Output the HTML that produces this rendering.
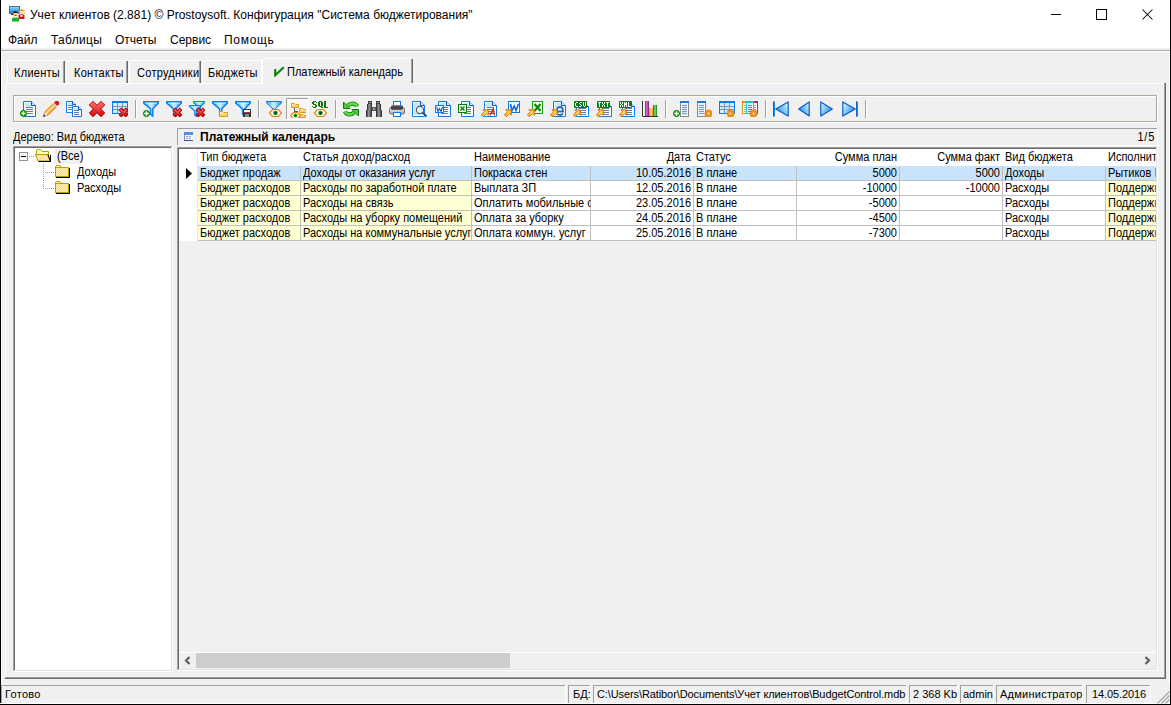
<!DOCTYPE html>
<html><head><meta charset="utf-8"><style>
html,body{margin:0;padding:0;}
body{width:1171px;height:705px;overflow:hidden;background:#f0f0f0;position:relative;font-family:"Liberation Sans",sans-serif;}
body>div,body>svg{position:absolute;}
.t{white-space:pre;}
</style></head><body>
<div style="left:0px;top:0px;width:1171px;height:48px;background:#fff"></div>
<div style="left:0px;top:50px;width:1171px;height:1px;background:#aca899"></div>
<div style="left:0px;top:51px;width:1171px;height:1px;background:#ffffff"></div>
<div class="t" style="top:8px;font-size:12px;line-height:14px;color:#000;left:30px;">Учет клиентов (2.881) © Prostoysoft. Конфигурация &quot;Система бюджетирования&quot;</div>
<div class="t" style="top:33px;font-size:12px;line-height:14px;color:#000;left:8px;letter-spacing:0px;">Файл</div>
<div class="t" style="top:33px;font-size:12px;line-height:14px;color:#000;left:51px;letter-spacing:0.3px;">Таблицы</div>
<div class="t" style="top:33px;font-size:12px;line-height:14px;color:#000;left:115px;letter-spacing:0px;">Отчеты</div>
<div class="t" style="top:33px;font-size:12px;line-height:14px;color:#000;left:170px;letter-spacing:0px;">Сервис</div>
<div class="t" style="top:33px;font-size:12px;line-height:14px;color:#000;left:224px;letter-spacing:0.7px;">Помощь</div>
<div style="left:1051px;top:14px;width:10px;height:1px;background:#000"></div>
<div style="left:1096px;top:9px;width:9px;height:9px;border:1px solid #000;box-sizing:content-box"></div>
<svg style="position:absolute;left:1142px;top:9px" width="11" height="11"><path d="M0.5 0.5L10.5 10.5M10.5 0.5L0.5 10.5" stroke="#000" stroke-width="1.05"/></svg>
<div style="left:0px;top:0px;width:1px;height:705px;background:#000"></div>
<div style="left:1170px;top:0px;width:1px;height:705px;background:#000"></div>
<div style="left:1px;top:52px;width:1px;height:633px;background:#ffffff"></div>
<div style="left:1169px;top:52px;width:1px;height:633px;background:#ffffff"></div>
<div style="left:0px;top:704px;width:1171px;height:1px;background:#000"></div>
<div style="left:8px;top:60px;width:56px;height:1px;background:#ffffff"></div>
<div style="left:7px;top:61px;width:1px;height:22px;background:#ffffff"></div>
<div style="left:63px;top:61px;width:1px;height:22px;background:#a0a0a0"></div>
<div style="left:64px;top:61px;width:1px;height:22px;background:#696969"></div>
<div class="t" style="top:66px;font-size:12px;line-height:14px;color:#000;transform:scaleX(0.917);transform-origin:0 0;left:14px;letter-spacing:0.3px;">Клиенты</div>
<div style="left:67px;top:60px;width:60px;height:1px;background:#ffffff"></div>
<div style="left:66px;top:61px;width:1px;height:22px;background:#ffffff"></div>
<div style="left:126px;top:61px;width:1px;height:22px;background:#a0a0a0"></div>
<div style="left:127px;top:61px;width:1px;height:22px;background:#696969"></div>
<div class="t" style="top:66px;font-size:12px;line-height:14px;color:#000;transform:scaleX(0.917);transform-origin:0 0;left:74px;letter-spacing:0.3px;">Контакты</div>
<div style="left:130px;top:60px;width:70px;height:1px;background:#ffffff"></div>
<div style="left:129px;top:61px;width:1px;height:22px;background:#ffffff"></div>
<div style="left:199px;top:61px;width:1px;height:22px;background:#a0a0a0"></div>
<div style="left:200px;top:61px;width:1px;height:22px;background:#696969"></div>
<div class="t" style="top:66px;font-size:12px;line-height:14px;color:#000;transform:scaleX(0.917);transform-origin:0 0;left:137px;letter-spacing:0.3px;">Сотрудники</div>
<div style="left:203px;top:60px;width:59px;height:1px;background:#ffffff"></div>
<div style="left:202px;top:61px;width:1px;height:22px;background:#ffffff"></div>
<div class="t" style="top:66px;font-size:12px;line-height:14px;color:#000;transform:scaleX(0.917);transform-origin:0 0;left:208px;letter-spacing:0.3px;">Бюджеты</div>
<div style="left:261px;top:60px;width:1px;height:24px;background:#ffffff"></div>
<div style="left:263px;top:58px;width:148px;height:1px;background:#ffffff"></div>
<div style="left:262px;top:59px;width:1px;height:25px;background:#ffffff"></div>
<div style="left:411px;top:59px;width:1px;height:24px;background:#a0a0a0"></div>
<div style="left:412px;top:59px;width:1px;height:24px;background:#696969"></div>
<svg style="position:absolute;left:273px;top:66px" width="12" height="11"><path d="M2.2 3 L2.2 9.3 L10.8 1.2" stroke="#008000" stroke-width="2" fill="none" stroke-linejoin="miter"/></svg>
<div class="t" style="top:65px;font-size:12px;line-height:14px;color:#000;transform:scaleX(0.917);transform-origin:0 0;left:287px;">Платежный календарь</div>
<div style="left:5px;top:83px;width:257px;height:1px;background:#ffffff"></div>
<div style="left:413px;top:83px;width:752px;height:1px;background:#ffffff"></div>
<div style="left:5px;top:83px;width:1px;height:595px;background:#ffffff"></div>
<div style="left:1164px;top:83px;width:1px;height:595px;background:#a0a0a0"></div>
<div style="left:1165px;top:83px;width:1px;height:596px;background:#696969"></div>
<div style="left:5px;top:677px;width:1160px;height:1px;background:#a0a0a0"></div>
<div style="left:5px;top:678px;width:1161px;height:1px;background:#696969"></div>
<div style="left:13px;top:95px;width:1144px;height:1px;background:#aca899"></div>
<div style="left:13px;top:95px;width:1px;height:27px;background:#aca899"></div>
<div style="left:14px;top:96px;width:1142px;height:1px;background:#ffffff"></div>
<div style="left:14px;top:96px;width:1px;height:25px;background:#ffffff"></div>
<div style="left:13px;top:121px;width:1144px;height:1px;background:#aca899"></div>
<div style="left:1156px;top:95px;width:1px;height:27px;background:#aca899"></div>
<div style="left:13px;top:122px;width:1145px;height:1px;background:#ffffff"></div>
<div style="left:1157px;top:95px;width:1px;height:28px;background:#ffffff"></div>
<div style="left:135px;top:100px;width:1px;height:18px;background:#a0a0a0"></div>
<div style="left:136px;top:100px;width:1px;height:18px;background:#ffffff"></div>
<div style="left:258px;top:100px;width:1px;height:18px;background:#a0a0a0"></div>
<div style="left:259px;top:100px;width:1px;height:18px;background:#ffffff"></div>
<div style="left:335px;top:100px;width:1px;height:18px;background:#a0a0a0"></div>
<div style="left:336px;top:100px;width:1px;height:18px;background:#ffffff"></div>
<div style="left:665px;top:100px;width:1px;height:18px;background:#a0a0a0"></div>
<div style="left:666px;top:100px;width:1px;height:18px;background:#ffffff"></div>
<div style="left:765px;top:100px;width:1px;height:18px;background:#a0a0a0"></div>
<div style="left:766px;top:100px;width:1px;height:18px;background:#ffffff"></div>
<div style="left:865px;top:100px;width:1px;height:18px;background:#a0a0a0"></div>
<div style="left:866px;top:100px;width:1px;height:18px;background:#ffffff"></div>
<div class="t" style="top:130px;font-size:12px;line-height:14px;color:#000;transform:scaleX(0.917);transform-origin:0 0;left:13px;">Дерево: Вид бюджета</div>
<div style="left:15px;top:148px;width:156px;height:522px;background:#fff"></div>
<div style="left:13px;top:146px;width:159px;height:1px;background:#a0a0a0"></div>
<div style="left:13px;top:146px;width:1px;height:525px;background:#a0a0a0"></div>
<div style="left:14px;top:147px;width:157px;height:1px;background:#696969"></div>
<div style="left:14px;top:147px;width:1px;height:523px;background:#696969"></div>
<div style="left:13px;top:671px;width:160px;height:1px;background:#ffffff"></div>
<div style="left:172px;top:146px;width:1px;height:526px;background:#ffffff"></div>
<div style="left:14px;top:670px;width:158px;height:1px;background:#e3e3e3"></div>
<div style="left:171px;top:147px;width:1px;height:524px;background:#e3e3e3"></div>
<div style="left:177px;top:128px;width:981px;height:1px;background:#a0a0a0"></div>
<div style="left:177px;top:128px;width:1px;height:18px;background:#a0a0a0"></div>
<div style="left:177px;top:145px;width:981px;height:1px;background:#ffffff"></div>
<div style="left:1157px;top:128px;width:1px;height:18px;background:#ffffff"></div>
<div class="t" style="top:130px;font-size:12px;line-height:14px;color:#000;font-weight:bold;left:200px;">Платежный календарь</div>
<div class="t" style="top:130px;font-size:12px;line-height:14px;color:#000;transform:scaleX(0.917);transform-origin:100% 0;left:855px;width:300px;text-align:right;letter-spacing:0.8px;">1/5</div>
<div style="left:177px;top:147px;width:980px;height:1px;background:#a0a0a0"></div>
<div style="left:177px;top:147px;width:1px;height:523px;background:#a0a0a0"></div>
<div style="left:178px;top:148px;width:978px;height:1px;background:#696969"></div>
<div style="left:178px;top:148px;width:1px;height:521px;background:#696969"></div>
<div style="left:177px;top:670px;width:981px;height:1px;background:#ffffff"></div>
<div style="left:1157px;top:147px;width:1px;height:524px;background:#ffffff"></div>
<div style="left:178px;top:669px;width:979px;height:1px;background:#e3e3e3"></div>
<div style="left:1156px;top:148px;width:1px;height:522px;background:#e3e3e3"></div>
<div style="left:179px;top:149px;width:977px;height:17px;background:#fff"></div>
<div style="left:179px;top:166px;width:18px;height:75px;background:#fff"></div>
<div style="left:197px;top:149px;width:1px;height:91px;background:#e8e6ec"></div>
<div style="left:198px;top:166px;width:102px;height:14px;background:#c9e3fb"></div>
<div style="left:300px;top:166px;width:1px;height:15px;background:#c0c0c0"></div>
<div style="left:301px;top:166px;width:170px;height:14px;background:#c9e3fb"></div>
<div style="left:471px;top:166px;width:1px;height:15px;background:#c0c0c0"></div>
<div style="left:472px;top:166px;width:118px;height:14px;background:#c9e3fb"></div>
<div style="left:590px;top:166px;width:1px;height:15px;background:#c0c0c0"></div>
<div style="left:591px;top:166px;width:102px;height:14px;background:#c9e3fb"></div>
<div style="left:693px;top:166px;width:1px;height:15px;background:#c0c0c0"></div>
<div style="left:694px;top:166px;width:102px;height:14px;background:#c9e3fb"></div>
<div style="left:796px;top:166px;width:1px;height:15px;background:#c0c0c0"></div>
<div style="left:797px;top:166px;width:102px;height:14px;background:#c9e3fb"></div>
<div style="left:899px;top:166px;width:1px;height:15px;background:#c0c0c0"></div>
<div style="left:900px;top:166px;width:102px;height:14px;background:#c9e3fb"></div>
<div style="left:1002px;top:166px;width:1px;height:15px;background:#c0c0c0"></div>
<div style="left:1003px;top:166px;width:102px;height:14px;background:#c9e3fb"></div>
<div style="left:1105px;top:166px;width:1px;height:15px;background:#c0c0c0"></div>
<div style="left:1106px;top:166px;width:50px;height:14px;background:#c9e3fb"></div>
<div style="left:198px;top:180px;width:958px;height:1px;background:#c0c0c0"></div>
<div class="t" style="top:166px;font-size:12px;line-height:14px;color:#000;transform:scaleX(0.917);transform-origin:0 0;left:200px;width:109.1px;overflow:hidden;">Бюджет продаж</div>
<div class="t" style="top:166px;font-size:12px;line-height:14px;color:#000;transform:scaleX(0.917);transform-origin:0 0;left:303px;width:183.2px;overflow:hidden;">Доходы от оказания услуг</div>
<div class="t" style="top:166px;font-size:12px;line-height:14px;color:#000;transform:scaleX(0.917);transform-origin:0 0;left:474px;width:126.5px;overflow:hidden;">Покраска стен</div>
<div class="t" style="top:166px;font-size:12px;line-height:14px;color:#000;transform:scaleX(0.917);transform-origin:100% 0;left:391px;width:300px;text-align:right;">10.05.2016</div>
<div class="t" style="top:166px;font-size:12px;line-height:14px;color:#000;transform:scaleX(0.917);transform-origin:0 0;left:696px;width:109.1px;overflow:hidden;">В плане</div>
<div class="t" style="top:166px;font-size:12px;line-height:14px;color:#000;transform:scaleX(0.917);transform-origin:100% 0;left:597px;width:300px;text-align:right;">5000</div>
<div class="t" style="top:166px;font-size:12px;line-height:14px;color:#000;transform:scaleX(0.917);transform-origin:100% 0;left:700px;width:300px;text-align:right;">5000</div>
<div class="t" style="top:166px;font-size:12px;line-height:14px;color:#000;transform:scaleX(0.917);transform-origin:0 0;left:1005px;width:109.1px;overflow:hidden;">Доходы</div>
<div class="t" style="top:166px;font-size:12px;line-height:14px;color:#000;transform:scaleX(0.917);transform-origin:0 0;left:1108px;width:52.3px;overflow:hidden;">Рытиков Е</div>
<div style="left:198px;top:181px;width:102px;height:14px;background:#ffffd4"></div>
<div style="left:300px;top:181px;width:1px;height:15px;background:#c0c0c0"></div>
<div style="left:301px;top:181px;width:170px;height:14px;background:#ffffd4"></div>
<div style="left:471px;top:181px;width:1px;height:15px;background:#c0c0c0"></div>
<div style="left:472px;top:181px;width:118px;height:14px;background:#fff"></div>
<div style="left:590px;top:181px;width:1px;height:15px;background:#c0c0c0"></div>
<div style="left:591px;top:181px;width:102px;height:14px;background:#fff"></div>
<div style="left:693px;top:181px;width:1px;height:15px;background:#c0c0c0"></div>
<div style="left:694px;top:181px;width:102px;height:14px;background:#fff"></div>
<div style="left:796px;top:181px;width:1px;height:15px;background:#c0c0c0"></div>
<div style="left:797px;top:181px;width:102px;height:14px;background:#fff"></div>
<div style="left:899px;top:181px;width:1px;height:15px;background:#c0c0c0"></div>
<div style="left:900px;top:181px;width:102px;height:14px;background:#fff"></div>
<div style="left:1002px;top:181px;width:1px;height:15px;background:#c0c0c0"></div>
<div style="left:1003px;top:181px;width:102px;height:14px;background:#fff"></div>
<div style="left:1105px;top:181px;width:1px;height:15px;background:#c0c0c0"></div>
<div style="left:1106px;top:181px;width:50px;height:14px;background:#ffffd4"></div>
<div style="left:198px;top:195px;width:958px;height:1px;background:#c0c0c0"></div>
<div class="t" style="top:181px;font-size:12px;line-height:14px;color:#000;transform:scaleX(0.917);transform-origin:0 0;left:200px;width:109.1px;overflow:hidden;">Бюджет расходов</div>
<div class="t" style="top:181px;font-size:12px;line-height:14px;color:#000;transform:scaleX(0.917);transform-origin:0 0;left:303px;width:183.2px;overflow:hidden;">Расходы по заработной плате</div>
<div class="t" style="top:181px;font-size:12px;line-height:14px;color:#000;transform:scaleX(0.917);transform-origin:0 0;left:474px;width:126.5px;overflow:hidden;">Выплата ЗП</div>
<div class="t" style="top:181px;font-size:12px;line-height:14px;color:#000;transform:scaleX(0.917);transform-origin:100% 0;left:391px;width:300px;text-align:right;">12.05.2016</div>
<div class="t" style="top:181px;font-size:12px;line-height:14px;color:#000;transform:scaleX(0.917);transform-origin:0 0;left:696px;width:109.1px;overflow:hidden;">В плане</div>
<div class="t" style="top:181px;font-size:12px;line-height:14px;color:#000;transform:scaleX(0.917);transform-origin:100% 0;left:597px;width:300px;text-align:right;">-10000</div>
<div class="t" style="top:181px;font-size:12px;line-height:14px;color:#000;transform:scaleX(0.917);transform-origin:100% 0;left:700px;width:300px;text-align:right;">-10000</div>
<div class="t" style="top:181px;font-size:12px;line-height:14px;color:#000;transform:scaleX(0.917);transform-origin:0 0;left:1005px;width:109.1px;overflow:hidden;">Расходы</div>
<div class="t" style="top:181px;font-size:12px;line-height:14px;color:#000;transform:scaleX(0.917);transform-origin:0 0;left:1108px;width:52.3px;overflow:hidden;">Поддержка</div>
<div style="left:198px;top:196px;width:102px;height:14px;background:#ffffd4"></div>
<div style="left:300px;top:196px;width:1px;height:15px;background:#c0c0c0"></div>
<div style="left:301px;top:196px;width:170px;height:14px;background:#ffffd4"></div>
<div style="left:471px;top:196px;width:1px;height:15px;background:#c0c0c0"></div>
<div style="left:472px;top:196px;width:118px;height:14px;background:#fff"></div>
<div style="left:590px;top:196px;width:1px;height:15px;background:#c0c0c0"></div>
<div style="left:591px;top:196px;width:102px;height:14px;background:#fff"></div>
<div style="left:693px;top:196px;width:1px;height:15px;background:#c0c0c0"></div>
<div style="left:694px;top:196px;width:102px;height:14px;background:#fff"></div>
<div style="left:796px;top:196px;width:1px;height:15px;background:#c0c0c0"></div>
<div style="left:797px;top:196px;width:102px;height:14px;background:#fff"></div>
<div style="left:899px;top:196px;width:1px;height:15px;background:#c0c0c0"></div>
<div style="left:900px;top:196px;width:102px;height:14px;background:#fff"></div>
<div style="left:1002px;top:196px;width:1px;height:15px;background:#c0c0c0"></div>
<div style="left:1003px;top:196px;width:102px;height:14px;background:#fff"></div>
<div style="left:1105px;top:196px;width:1px;height:15px;background:#c0c0c0"></div>
<div style="left:1106px;top:196px;width:50px;height:14px;background:#ffffd4"></div>
<div style="left:198px;top:210px;width:958px;height:1px;background:#c0c0c0"></div>
<div class="t" style="top:196px;font-size:12px;line-height:14px;color:#000;transform:scaleX(0.917);transform-origin:0 0;left:200px;width:109.1px;overflow:hidden;">Бюджет расходов</div>
<div class="t" style="top:196px;font-size:12px;line-height:14px;color:#000;transform:scaleX(0.917);transform-origin:0 0;left:303px;width:183.2px;overflow:hidden;">Расходы на связь</div>
<div class="t" style="top:196px;font-size:12px;line-height:14px;color:#000;transform:scaleX(0.917);transform-origin:0 0;left:474px;width:126.5px;overflow:hidden;">Оплатить мобильные связь</div>
<div class="t" style="top:196px;font-size:12px;line-height:14px;color:#000;transform:scaleX(0.917);transform-origin:100% 0;left:391px;width:300px;text-align:right;">23.05.2016</div>
<div class="t" style="top:196px;font-size:12px;line-height:14px;color:#000;transform:scaleX(0.917);transform-origin:0 0;left:696px;width:109.1px;overflow:hidden;">В плане</div>
<div class="t" style="top:196px;font-size:12px;line-height:14px;color:#000;transform:scaleX(0.917);transform-origin:100% 0;left:597px;width:300px;text-align:right;">-5000</div>
<div class="t" style="top:196px;font-size:12px;line-height:14px;color:#000;transform:scaleX(0.917);transform-origin:0 0;left:1005px;width:109.1px;overflow:hidden;">Расходы</div>
<div class="t" style="top:196px;font-size:12px;line-height:14px;color:#000;transform:scaleX(0.917);transform-origin:0 0;left:1108px;width:52.3px;overflow:hidden;">Поддержка</div>
<div style="left:198px;top:211px;width:102px;height:14px;background:#ffffd4"></div>
<div style="left:300px;top:211px;width:1px;height:15px;background:#c0c0c0"></div>
<div style="left:301px;top:211px;width:170px;height:14px;background:#ffffd4"></div>
<div style="left:471px;top:211px;width:1px;height:15px;background:#c0c0c0"></div>
<div style="left:472px;top:211px;width:118px;height:14px;background:#fff"></div>
<div style="left:590px;top:211px;width:1px;height:15px;background:#c0c0c0"></div>
<div style="left:591px;top:211px;width:102px;height:14px;background:#fff"></div>
<div style="left:693px;top:211px;width:1px;height:15px;background:#c0c0c0"></div>
<div style="left:694px;top:211px;width:102px;height:14px;background:#fff"></div>
<div style="left:796px;top:211px;width:1px;height:15px;background:#c0c0c0"></div>
<div style="left:797px;top:211px;width:102px;height:14px;background:#fff"></div>
<div style="left:899px;top:211px;width:1px;height:15px;background:#c0c0c0"></div>
<div style="left:900px;top:211px;width:102px;height:14px;background:#fff"></div>
<div style="left:1002px;top:211px;width:1px;height:15px;background:#c0c0c0"></div>
<div style="left:1003px;top:211px;width:102px;height:14px;background:#fff"></div>
<div style="left:1105px;top:211px;width:1px;height:15px;background:#c0c0c0"></div>
<div style="left:1106px;top:211px;width:50px;height:14px;background:#ffffd4"></div>
<div style="left:198px;top:225px;width:958px;height:1px;background:#c0c0c0"></div>
<div class="t" style="top:211px;font-size:12px;line-height:14px;color:#000;transform:scaleX(0.917);transform-origin:0 0;left:200px;width:109.1px;overflow:hidden;">Бюджет расходов</div>
<div class="t" style="top:211px;font-size:12px;line-height:14px;color:#000;transform:scaleX(0.917);transform-origin:0 0;left:303px;width:183.2px;overflow:hidden;">Расходы на уборку помещений</div>
<div class="t" style="top:211px;font-size:12px;line-height:14px;color:#000;transform:scaleX(0.917);transform-origin:0 0;left:474px;width:126.5px;overflow:hidden;">Оплата за уборку</div>
<div class="t" style="top:211px;font-size:12px;line-height:14px;color:#000;transform:scaleX(0.917);transform-origin:100% 0;left:391px;width:300px;text-align:right;">24.05.2016</div>
<div class="t" style="top:211px;font-size:12px;line-height:14px;color:#000;transform:scaleX(0.917);transform-origin:0 0;left:696px;width:109.1px;overflow:hidden;">В плане</div>
<div class="t" style="top:211px;font-size:12px;line-height:14px;color:#000;transform:scaleX(0.917);transform-origin:100% 0;left:597px;width:300px;text-align:right;">-4500</div>
<div class="t" style="top:211px;font-size:12px;line-height:14px;color:#000;transform:scaleX(0.917);transform-origin:0 0;left:1005px;width:109.1px;overflow:hidden;">Расходы</div>
<div class="t" style="top:211px;font-size:12px;line-height:14px;color:#000;transform:scaleX(0.917);transform-origin:0 0;left:1108px;width:52.3px;overflow:hidden;">Поддержка</div>
<div style="left:198px;top:226px;width:102px;height:14px;background:#ffffd4"></div>
<div style="left:300px;top:226px;width:1px;height:15px;background:#c0c0c0"></div>
<div style="left:301px;top:226px;width:170px;height:14px;background:#ffffd4"></div>
<div style="left:471px;top:226px;width:1px;height:15px;background:#c0c0c0"></div>
<div style="left:472px;top:226px;width:118px;height:14px;background:#fff"></div>
<div style="left:590px;top:226px;width:1px;height:15px;background:#c0c0c0"></div>
<div style="left:591px;top:226px;width:102px;height:14px;background:#fff"></div>
<div style="left:693px;top:226px;width:1px;height:15px;background:#c0c0c0"></div>
<div style="left:694px;top:226px;width:102px;height:14px;background:#fff"></div>
<div style="left:796px;top:226px;width:1px;height:15px;background:#c0c0c0"></div>
<div style="left:797px;top:226px;width:102px;height:14px;background:#fff"></div>
<div style="left:899px;top:226px;width:1px;height:15px;background:#c0c0c0"></div>
<div style="left:900px;top:226px;width:102px;height:14px;background:#fff"></div>
<div style="left:1002px;top:226px;width:1px;height:15px;background:#c0c0c0"></div>
<div style="left:1003px;top:226px;width:102px;height:14px;background:#fff"></div>
<div style="left:1105px;top:226px;width:1px;height:15px;background:#c0c0c0"></div>
<div style="left:1106px;top:226px;width:50px;height:14px;background:#ffffd4"></div>
<div style="left:198px;top:240px;width:958px;height:1px;background:#c0c0c0"></div>
<div class="t" style="top:226px;font-size:12px;line-height:14px;color:#000;transform:scaleX(0.917);transform-origin:0 0;left:200px;width:109.1px;overflow:hidden;">Бюджет расходов</div>
<div class="t" style="top:226px;font-size:12px;line-height:14px;color:#000;transform:scaleX(0.917);transform-origin:0 0;left:303px;width:183.2px;overflow:hidden;">Расходы на коммунальные услуги</div>
<div class="t" style="top:226px;font-size:12px;line-height:14px;color:#000;transform:scaleX(0.917);transform-origin:0 0;left:474px;width:126.5px;overflow:hidden;">Оплата коммун. услуг</div>
<div class="t" style="top:226px;font-size:12px;line-height:14px;color:#000;transform:scaleX(0.917);transform-origin:100% 0;left:391px;width:300px;text-align:right;">25.05.2016</div>
<div class="t" style="top:226px;font-size:12px;line-height:14px;color:#000;transform:scaleX(0.917);transform-origin:0 0;left:696px;width:109.1px;overflow:hidden;">В плане</div>
<div class="t" style="top:226px;font-size:12px;line-height:14px;color:#000;transform:scaleX(0.917);transform-origin:100% 0;left:597px;width:300px;text-align:right;">-7300</div>
<div class="t" style="top:226px;font-size:12px;line-height:14px;color:#000;transform:scaleX(0.917);transform-origin:0 0;left:1005px;width:109.1px;overflow:hidden;">Расходы</div>
<div class="t" style="top:226px;font-size:12px;line-height:14px;color:#000;transform:scaleX(0.917);transform-origin:0 0;left:1108px;width:52.3px;overflow:hidden;">Поддержка</div>
<div class="t" style="top:150px;font-size:12px;line-height:14px;color:#000;transform:scaleX(0.917);transform-origin:0 0;left:200px;width:109.1px;overflow:hidden;">Тип бюджета</div>
<div class="t" style="top:150px;font-size:12px;line-height:14px;color:#000;transform:scaleX(0.917);transform-origin:0 0;left:303px;width:183.2px;overflow:hidden;">Статья доход/расход</div>
<div class="t" style="top:150px;font-size:12px;line-height:14px;color:#000;transform:scaleX(0.917);transform-origin:0 0;left:474px;width:126.5px;overflow:hidden;">Наименование</div>
<div class="t" style="top:150px;font-size:12px;line-height:14px;color:#000;transform:scaleX(0.917);transform-origin:100% 0;left:391px;width:300px;text-align:right;">Дата</div>
<div class="t" style="top:150px;font-size:12px;line-height:14px;color:#000;transform:scaleX(0.917);transform-origin:0 0;left:696px;width:109.1px;overflow:hidden;">Статус</div>
<div class="t" style="top:150px;font-size:12px;line-height:14px;color:#000;transform:scaleX(0.917);transform-origin:100% 0;left:597px;width:300px;text-align:right;">Сумма план</div>
<div class="t" style="top:150px;font-size:12px;line-height:14px;color:#000;transform:scaleX(0.917);transform-origin:100% 0;left:700px;width:300px;text-align:right;">Сумма факт</div>
<div class="t" style="top:150px;font-size:12px;line-height:14px;color:#000;transform:scaleX(0.917);transform-origin:0 0;left:1005px;width:109.1px;overflow:hidden;">Вид бюджета</div>
<div class="t" style="top:150px;font-size:12px;line-height:14px;color:#000;transform:scaleX(0.917);transform-origin:0 0;left:1108px;width:52.3px;overflow:hidden;">Исполнитель</div>
<svg style="position:absolute;left:186px;top:168px" width="7" height="11"><path d="M0 0 L6 5.5 L0 11Z" fill="#000"/></svg>
<div style="left:179px;top:652px;width:977px;height:1px;background:#ffffff"></div>
<div style="left:196px;top:653px;width:314px;height:15px;background:#cdcdcd"></div>
<svg style="position:absolute;left:184px;top:656px" width="7" height="9"><path d="M5.5 1 L2 4.5 L5.5 8" stroke="#606060" stroke-width="2.2" fill="none"/></svg>
<svg style="position:absolute;left:1144px;top:656px" width="7" height="9"><path d="M1.5 1 L5 4.5 L1.5 8" stroke="#606060" stroke-width="2.2" fill="none"/></svg>
<div style="left:1px;top:685px;width:564px;height:1px;background:#a0a0a0"></div>
<div style="left:1px;top:685px;width:1px;height:18px;background:#a0a0a0"></div>
<div style="left:565px;top:685px;width:1px;height:18px;background:#ffffff"></div>
<div style="left:0px;top:703px;width:1170px;height:1px;background:#ffffff"></div>
<div class="t" style="top:688px;font-size:11px;line-height:13px;color:#000;left:5px;letter-spacing:0.3px;">Готово</div>
<div style="left:568px;top:685px;width:22px;height:1px;background:#a0a0a0"></div>
<div style="left:568px;top:685px;width:1px;height:18px;background:#a0a0a0"></div>
<div style="left:590px;top:685px;width:1px;height:18px;background:#ffffff"></div>
<div class="t" style="top:688px;font-size:11px;line-height:13px;color:#000;left:573px;">БД:</div>
<div style="left:593px;top:685px;width:313px;height:1px;background:#a0a0a0"></div>
<div style="left:593px;top:685px;width:1px;height:18px;background:#a0a0a0"></div>
<div style="left:906px;top:685px;width:1px;height:18px;background:#ffffff"></div>
<div class="t" style="top:688px;font-size:11px;line-height:13px;color:#000;left:597px;letter-spacing:-0.1px;">C:\Users\Ratibor\Documents\Учет клиентов\BudgetControl.mdb</div>
<div style="left:909px;top:685px;width:48px;height:1px;background:#a0a0a0"></div>
<div style="left:909px;top:685px;width:1px;height:18px;background:#a0a0a0"></div>
<div style="left:957px;top:685px;width:1px;height:18px;background:#ffffff"></div>
<div class="t" style="top:688px;font-size:11px;line-height:13px;color:#000;left:913px;">2 368 Kb</div>
<div style="left:960px;top:685px;width:33px;height:1px;background:#a0a0a0"></div>
<div style="left:960px;top:685px;width:1px;height:18px;background:#a0a0a0"></div>
<div style="left:993px;top:685px;width:1px;height:18px;background:#ffffff"></div>
<div class="t" style="top:688px;font-size:11px;line-height:13px;color:#000;left:963px;">admin</div>
<div style="left:996px;top:685px;width:86px;height:1px;background:#a0a0a0"></div>
<div style="left:996px;top:685px;width:1px;height:18px;background:#a0a0a0"></div>
<div style="left:1082px;top:685px;width:1px;height:18px;background:#ffffff"></div>
<div class="t" style="top:688px;font-size:11px;line-height:13px;color:#000;left:1000px;letter-spacing:0.25px;">Администратор</div>
<div style="left:1086px;top:685px;width:64px;height:1px;background:#a0a0a0"></div>
<div style="left:1086px;top:685px;width:1px;height:18px;background:#a0a0a0"></div>
<div style="left:1150px;top:685px;width:1px;height:18px;background:#ffffff"></div>
<div class="t" style="top:688px;font-size:11px;line-height:13px;color:#000;left:1092px;letter-spacing:-0.1px;">14.05.2016</div>
<svg style="position:absolute;left:1157px;top:691px" width="13" height="13"><path d="M12.5 0.5 L0.5 12.5 M12.5 4.5 L4.5 12.5 M12.5 8.5 L8.5 12.5" stroke="#a8a8a8" stroke-width="1.3"/></svg>
<svg style="position:absolute;left:9px;top:6px" width="17" height="16"><defs><linearGradient id="gScr" x1="0" y1="0" x2="0" y2="1"><stop offset="0" stop-color="#9fd8ff"/><stop offset="0.5" stop-color="#48b0e0"/><stop offset="1" stop-color="#2a6ad8"/></linearGradient></defs><rect x="0.5" y="0.5" width="10" height="7" fill="url(#gScr)" stroke="#6a6a6a"/><rect x="2" y="8" width="3" height="1" fill="#333"/><path d="M10 4.5 Q12.5 1.5 15.5 4.5 V8 H10Z" fill="#f0a020"/><rect x="11" y="5" width="4" height="3" fill="#ffd8b0"/><path d="M9.5 9 Q12.5 7.5 15.5 9 V13 H9.5Z" fill="#d81010"/><rect x="11.5" y="9" width="2" height="2" fill="#fff"/><path d="M4 6.5 Q6.5 3.5 9 6.5 V7.5 H4Z" fill="#222"/><rect x="4.5" y="7" width="4.5" height="3.5" fill="#ffc8a0"/><rect x="5.5" y="9" width="2" height="1" fill="#e04010"/><path d="M3 15.5 V12.5 Q6.5 10 10 12.5 V15.5Z" fill="#18b030"/><rect x="5.5" y="11" width="2" height="1" fill="#a0ffa0"/></svg>
<svg style="position:absolute;left:184px;top:132px" width="9" height="9"><rect x="0" y="0" width="9" height="9" fill="#5070b8"/><rect x="0" y="0" width="9" height="3" fill="#5a8ae8"/><rect x="1" y="3" width="8" height="5" fill="#fbfcff"/><rect x="0" y="3" width="1" height="6" fill="#7a90c8"/><rect x="0" y="8" width="9" height="1" fill="#3a5090"/><rect x="2" y="4" width="2" height="1" fill="#8a9ac0"/><rect x="5" y="4" width="2" height="1" fill="#8a9ac0"/><rect x="2" y="6" width="2" height="1" fill="#8a9ac0"/><rect x="5" y="6" width="2" height="1" fill="#8a9ac0"/></svg>
<div style="left:19px;top:152px;width:9px;height:9px;background:#fff;border:1px solid #919191;box-sizing:border-box"></div>
<div style="left:21px;top:156px;width:5px;height:1px;background:#000"></div>
<div style="left:29px;top:156px;width:1px;height:1px;background:#a0a0a0"></div>
<div style="left:31px;top:156px;width:1px;height:1px;background:#a0a0a0"></div>
<div style="left:33px;top:156px;width:1px;height:1px;background:#a0a0a0"></div>
<div style="left:43px;top:164px;width:1px;height:1px;background:#a0a0a0"></div>
<div style="left:43px;top:166px;width:1px;height:1px;background:#a0a0a0"></div>
<div style="left:43px;top:168px;width:1px;height:1px;background:#a0a0a0"></div>
<div style="left:43px;top:170px;width:1px;height:1px;background:#a0a0a0"></div>
<div style="left:43px;top:172px;width:1px;height:1px;background:#a0a0a0"></div>
<div style="left:43px;top:174px;width:1px;height:1px;background:#a0a0a0"></div>
<div style="left:43px;top:176px;width:1px;height:1px;background:#a0a0a0"></div>
<div style="left:43px;top:178px;width:1px;height:1px;background:#a0a0a0"></div>
<div style="left:43px;top:180px;width:1px;height:1px;background:#a0a0a0"></div>
<div style="left:43px;top:182px;width:1px;height:1px;background:#a0a0a0"></div>
<div style="left:43px;top:184px;width:1px;height:1px;background:#a0a0a0"></div>
<div style="left:43px;top:186px;width:1px;height:1px;background:#a0a0a0"></div>
<div style="left:43px;top:188px;width:1px;height:1px;background:#a0a0a0"></div>
<div style="left:45px;top:172px;width:1px;height:1px;background:#a0a0a0"></div>
<div style="left:47px;top:172px;width:1px;height:1px;background:#a0a0a0"></div>
<div style="left:49px;top:172px;width:1px;height:1px;background:#a0a0a0"></div>
<div style="left:51px;top:172px;width:1px;height:1px;background:#a0a0a0"></div>
<div style="left:53px;top:172px;width:1px;height:1px;background:#a0a0a0"></div>
<div style="left:45px;top:188px;width:1px;height:1px;background:#a0a0a0"></div>
<div style="left:47px;top:188px;width:1px;height:1px;background:#a0a0a0"></div>
<div style="left:49px;top:188px;width:1px;height:1px;background:#a0a0a0"></div>
<div style="left:51px;top:188px;width:1px;height:1px;background:#a0a0a0"></div>
<div style="left:53px;top:188px;width:1px;height:1px;background:#a0a0a0"></div>
<div style="left:54px;top:149px;width:29px;height:15px;background:#f0f0f0"></div>
<svg style="position:absolute;left:35px;top:149px" width="17" height="14"><defs><pattern id="pDith" width="2" height="2" patternUnits="userSpaceOnUse"><rect width="2" height="2" fill="#ffd68a"/><rect width="1" height="1" fill="#fff0b0"/><rect x="1" y="1" width="1" height="1" fill="#fff0b0"/></pattern></defs><path d="M1.5 5 V2 Q1.5 0.5 3.5 0.5 H5.5 L7 2.5 H13.5 V6" fill="#ffffa8" stroke="#b0a000"/><path d="M0.5 5.5 H12.5 L15 12 H3 Z" fill="url(#pDith)" stroke="#b0a000"/><path d="M13 5.5 L15.5 12.5 H3.5" stroke="#000" fill="none"/><path d="M15.5 6 V12.5" stroke="#000"/></svg>
<svg style="position:absolute;left:55px;top:165px" width="15" height="13"><path d="M0.5 3 V1.8 Q0.5 0.5 2 0.5 H5 L6.5 2.5" fill="#ffffa8" stroke="#b0a000"/><rect x="0.5" y="2.5" width="13" height="9" fill="url(#pDith)" stroke="#b0a000"/><path d="M14.5 3 V12.5 H1" stroke="#000" fill="none"/></svg>
<svg style="position:absolute;left:55px;top:181px" width="15" height="13"><path d="M0.5 3 V1.8 Q0.5 0.5 2 0.5 H5 L6.5 2.5" fill="#ffffa8" stroke="#b0a000"/><rect x="0.5" y="2.5" width="13" height="9" fill="url(#pDith)" stroke="#b0a000"/><path d="M14.5 3 V12.5 H1" stroke="#000" fill="none"/></svg>
<div class="t" style="top:149px;font-size:12px;line-height:14px;color:#000;transform:scaleX(0.917);transform-origin:0 0;left:57px;">(Все)</div>
<div class="t" style="top:165px;font-size:12px;line-height:14px;color:#000;transform:scaleX(0.917);transform-origin:0 0;left:77px;">Доходы</div>
<div class="t" style="top:181px;font-size:12px;line-height:14px;color:#000;transform:scaleX(0.917);transform-origin:0 0;left:77px;">Расходы</div>
<svg width="0" height="0" style="position:absolute;left:0;top:0">
<defs>
<linearGradient id="gBlue" x1="0" y1="0" x2="0" y2="1"><stop offset="0" stop-color="#b9e3ff"/><stop offset="1" stop-color="#2b95ef"/></linearGradient>
<linearGradient id="gFun" x1="0" y1="0" x2="1" y2="0"><stop offset="0" stop-color="#3aa6f5"/><stop offset="0.5" stop-color="#d8f1ff"/><stop offset="1" stop-color="#2a8fe8"/></linearGradient>
<linearGradient id="gRed" x1="0" y1="0" x2="0" y2="1"><stop offset="0" stop-color="#ff7a7a"/><stop offset="1" stop-color="#d00000"/></linearGradient>
<linearGradient id="gGreen" x1="0" y1="0" x2="0" y2="1"><stop offset="0" stop-color="#8ff07a"/><stop offset="1" stop-color="#179c0c"/></linearGradient>
<linearGradient id="gOrange" x1="0" y1="0" x2="1" y2="0"><stop offset="0" stop-color="#f08a00"/><stop offset="0.55" stop-color="#ffe28a"/><stop offset="1" stop-color="#e98a00"/></linearGradient>
<linearGradient id="gFolder" x1="0" y1="0" x2="0" y2="1"><stop offset="0" stop-color="#fff6b8"/><stop offset="1" stop-color="#f5c14a"/></linearGradient>
<linearGradient id="gGray" x1="0" y1="0" x2="1" y2="0"><stop offset="0" stop-color="#1e1e1e"/><stop offset="0.45" stop-color="#9a9a9a"/><stop offset="1" stop-color="#262626"/></linearGradient>
<linearGradient id="gPrint" x1="0" y1="0" x2="0" y2="1"><stop offset="0" stop-color="#e8e8e8"/><stop offset="0.5" stop-color="#5a5a5a"/><stop offset="1" stop-color="#d0d0d0"/></linearGradient>
<linearGradient id="gPrintTop" x1="0" y1="0" x2="0" y2="1"><stop offset="0" stop-color="#8a8a8a"/><stop offset="0.5" stop-color="#3a3a3a"/><stop offset="1" stop-color="#6a6a6a"/></linearGradient>
<linearGradient id="gPrintLow" x1="0" y1="0" x2="0" y2="1"><stop offset="0" stop-color="#fafafa"/><stop offset="1" stop-color="#a8a8a8"/></linearGradient>
<linearGradient id="gNavL" x1="1" y1="0" x2="0" y2="0.6"><stop offset="0" stop-color="#f4fbff"/><stop offset="0.35" stop-color="#9fd6ff"/><stop offset="1" stop-color="#2a8ef0"/></linearGradient>
<linearGradient id="gNavR" x1="0" y1="0" x2="1" y2="0.6"><stop offset="0" stop-color="#f4fbff"/><stop offset="0.35" stop-color="#9fd6ff"/><stop offset="1" stop-color="#2a8ef0"/></linearGradient>
<linearGradient id="gOrangeV" x1="0" y1="0" x2="0" y2="1"><stop offset="0" stop-color="#f29000"/><stop offset="0.45" stop-color="#ffe9a0"/><stop offset="1" stop-color="#e07800"/></linearGradient>
<linearGradient id="gArrow" x1="0" y1="1" x2="1" y2="0"><stop offset="0" stop-color="#ff9a00"/><stop offset="0.6" stop-color="#ffe060"/><stop offset="1" stop-color="#ffb000"/></linearGradient>
<radialGradient id="gGear"><stop offset="0" stop-color="#ffd060"/><stop offset="1" stop-color="#f59000"/></radialGradient>
<linearGradient id="gNav" x1="0" y1="0" x2="0" y2="1"><stop offset="0" stop-color="#dff2ff"/><stop offset="1" stop-color="#3c9ff0"/></linearGradient>
<linearGradient id="gPurple" x1="0" y1="0" x2="1" y2="0"><stop offset="0" stop-color="#9a0f8d"/><stop offset="0.45" stop-color="#e070d0"/><stop offset="1" stop-color="#8a0f7d"/></linearGradient>
<linearGradient id="gBarO" x1="0" y1="0" x2="1" y2="0"><stop offset="0" stop-color="#e98a00"/><stop offset="0.5" stop-color="#ffe08a"/><stop offset="1" stop-color="#e98a00"/></linearGradient>
<linearGradient id="gBarG" x1="0" y1="0" x2="1" y2="0"><stop offset="0" stop-color="#0a7a0a"/><stop offset="0.5" stop-color="#7fe07a"/><stop offset="1" stop-color="#0a7a0a"/></linearGradient>
<pattern id="pCheck" width="2" height="2" patternUnits="userSpaceOnUse"><rect width="2" height="2" fill="#f0f0f0"/><rect width="1" height="1" fill="#fff"/><rect x="1" y="1" width="1" height="1" fill="#fff"/></pattern>
</defs></svg>
<svg style="position:absolute;left:286px;top:98px" width="23" height="22"><rect x="1" y="1" width="21" height="20" fill="url(#pCheck)"/><path d="M0.5 21V0.5H22" stroke="#a0a0a0" fill="none"/><path d="M22.5 0V21.5H0" stroke="#fff" fill="none"/></svg>
<svg style="position:absolute;left:20px;top:101px;overflow:hidden" width="16" height="16"><path d="M3.5 0.5H11.5L15.5 4.5V15.5H3.5Z" fill="#fff" stroke="#0f7be6"/><rect x="5" y="2" width="6" height="5" fill="#c9e5fb"/><path d="M11.5 0.5V4.5H15.5" fill="#dcefff" stroke="#0a55c8"/><rect x="6" y="6" width="7" height="1" fill="#6c7d8e"/><rect x="6" y="8" width="7" height="1" fill="#6c7d8e"/><rect x="6" y="10" width="7" height="1" fill="#6c7d8e"/><rect x="6" y="12" width="7" height="1" fill="#6c7d8e"/><circle cx="3.5" cy="12.4" r="3.0" fill="#12b012" stroke="#077007" stroke-width="1"/><path d="M1.2999999999999998 12.4H5.7M3.5 10.2V14.600000000000001" stroke="#fff" stroke-width="1.3"/></svg>
<svg style="position:absolute;left:43px;top:101px;overflow:hidden" width="16" height="16"><g transform="rotate(-45 8 8)"><path d="M-3 8L1.2 5.6H13V10.4H1.2Z" fill="#f8d8c0" stroke="#c07050" stroke-width="0.5"/><path d="M-3 8L-0.8 6.8V9.2Z" fill="#222"/><rect x="1.2" y="5.6" width="11.8" height="4.8" fill="url(#gOrangeV)"/><rect x="13" y="5.6" width="1.6" height="4.8" fill="#d0d0d0"/><path d="M14.6 5.6H17.2Q18.6 5.6 18.6 8Q18.6 10.4 17.2 10.4H14.6Z" fill="#ee1010"/></g></svg>
<svg style="position:absolute;left:66px;top:101px;overflow:hidden" width="16" height="16"><path d="M0.5 0.5H6.5L9.5 3.5V11.5H0.5Z" fill="#fff" stroke="#0f7be6"/><rect x="2" y="2" width="4" height="3" fill="#c9e5fb"/><path d="M6.5 0.5V3.5H9.5" fill="#dcefff" stroke="#0a55c8"/><rect x="2" y="4" width="5" height="1" fill="#6c7d8e"/><rect x="2" y="6" width="5" height="1" fill="#6c7d8e"/><rect x="2" y="8" width="5" height="1" fill="#6c7d8e"/><path d="M6.5 5.5H12.5L15.5 8.5V15.5H6.5Z" fill="#fff" stroke="#0f7be6"/><rect x="8" y="7" width="4" height="3" fill="#c9e5fb"/><path d="M12.5 5.5V8.5H15.5" fill="#dcefff" stroke="#0a55c8"/><rect x="8" y="9" width="5" height="1" fill="#6c7d8e"/><rect x="8" y="11" width="5" height="1" fill="#6c7d8e"/><rect x="8" y="13" width="5" height="1" fill="#6c7d8e"/></svg>
<svg style="position:absolute;left:89px;top:101px;overflow:hidden" width="16" height="16"><g transform="translate(0 0) scale(1.0)"><path d="M4 0.3L8 4.3L12 0.3L15.7 4L11.7 8L15.7 12L12 15.7L8 11.7L4 15.7L0.3 12L4.3 8L0.3 4Z" fill="url(#gRed)" stroke="#b00000" stroke-width="1.00"/></g></svg>
<svg style="position:absolute;left:112px;top:101px;overflow:hidden" width="16" height="16"><rect x="0.5" y="0.5" width="15" height="12" fill="#d2eafc" stroke="#0f7be6"/><rect x="0" y="0" width="16" height="2" fill="#0f7be6"/><rect x="5" y="2" width="1" height="10" fill="#7a98b0"/><rect x="10" y="2" width="1" height="10" fill="#7a98b0"/><rect x="1" y="5" width="14" height="1" fill="#7a98b0"/><rect x="1" y="8" width="14" height="1" fill="#7a98b0"/><g transform="translate(7 7) scale(0.5625)"><path d="M4 0.3L8 4.3L12 0.3L15.7 4L11.7 8L15.7 12L12 15.7L8 11.7L4 15.7L0.3 12L4.3 8L0.3 4Z" fill="url(#gRed)" stroke="#b00000" stroke-width="1.78"/></g></svg>
<svg style="position:absolute;left:143px;top:101px;overflow:hidden" width="16" height="16"><g transform="translate(0 0) scale(1.0 1.0)"><path d="M0.8 0.8H15.2V2.2L9.8 7.8V15.2L7.6 13.2V7.8L0.8 2.2Z" fill="url(#gFun)" stroke="#0b82ea" stroke-width="1.5"/><rect x="2" y="1.6" width="12" height="1" fill="#e8f6ff" opacity="0.8"/></g><circle cx="3.5" cy="12.5" r="3.0" fill="#12b012" stroke="#077007" stroke-width="1"/><path d="M1.2999999999999998 12.5H5.7M3.5 10.3V14.7" stroke="#fff" stroke-width="1.3"/></svg>
<svg style="position:absolute;left:166px;top:101px;overflow:hidden" width="16" height="16"><g transform="translate(0 0) scale(1.0 1.0)"><path d="M0.8 0.8H15.2V2.2L9.8 7.8V15.2L7.6 13.2V7.8L0.8 2.2Z" fill="url(#gFun)" stroke="#0b82ea" stroke-width="1.5"/><rect x="2" y="1.6" width="12" height="1" fill="#e8f6ff" opacity="0.8"/></g><g transform="translate(7 7) scale(0.5625)"><path d="M4 0.3L8 4.3L12 0.3L15.7 4L11.7 8L15.7 12L12 15.7L8 11.7L4 15.7L0.3 12L4.3 8L0.3 4Z" fill="url(#gRed)" stroke="#b00000" stroke-width="1.78"/></g></svg>
<svg style="position:absolute;left:189px;top:101px;overflow:hidden" width="16" height="16"><g transform="translate(4 0) scale(0.75 0.75)"><path d="M0.8 0.8H15.2V2.2L9.8 7.8V15.2L7.6 13.2V7.8L0.8 2.2Z" fill="url(#gFun)" stroke="#0b82ea" stroke-width="1.5"/><rect x="2" y="1.6" width="12" height="1" fill="#e8f6ff" opacity="0.8"/></g><g transform="translate(0 4) scale(0.75 0.75)"><path d="M0.8 0.8H15.2V2.2L9.8 7.8V15.2L7.6 13.2V7.8L0.8 2.2Z" fill="url(#gFun)" stroke="#0b82ea" stroke-width="1.5"/><rect x="2" y="1.6" width="12" height="1" fill="#e8f6ff" opacity="0.8"/></g><g transform="translate(7 7) scale(0.5625)"><path d="M4 0.3L8 4.3L12 0.3L15.7 4L11.7 8L15.7 12L12 15.7L8 11.7L4 15.7L0.3 12L4.3 8L0.3 4Z" fill="url(#gRed)" stroke="#b00000" stroke-width="1.78"/></g></svg>
<svg style="position:absolute;left:212px;top:101px;overflow:hidden" width="16" height="16"><g transform="translate(0 0) scale(1.0 1.0)"><path d="M0.8 0.8H15.2V2.2L9.8 7.8V15.2L7.6 13.2V7.8L0.8 2.2Z" fill="url(#gFun)" stroke="#0b82ea" stroke-width="1.5"/><rect x="2" y="1.6" width="12" height="1" fill="#e8f6ff" opacity="0.8"/></g><path d="M7.5 10.5H10.5L11.5 11.5H15.5V15.5H7.5Z" fill="url(#gFolder)" stroke="#e39a1a"/></svg>
<svg style="position:absolute;left:235px;top:101px;overflow:hidden" width="16" height="16"><g transform="translate(0 0) scale(1.0 1.0)"><path d="M0.8 0.8H15.2V2.2L9.8 7.8V15.2L7.6 13.2V7.8L0.8 2.2Z" fill="url(#gFun)" stroke="#0b82ea" stroke-width="1.5"/><rect x="2" y="1.6" width="12" height="1" fill="#e8f6ff" opacity="0.8"/></g><rect x="8" y="8" width="8" height="8" fill="#333"/><rect x="9" y="9" width="6" height="3" fill="#fff"/><rect x="9" y="11" width="6" height="1" fill="#c03020"/><rect x="10" y="13" width="4" height="3" fill="#888"/></svg>
<svg style="position:absolute;left:266px;top:101px;overflow:hidden" width="16" height="16"><path d="M0.5 0.5H15.5V2L9 8H7L0.5 2Z" fill="url(#gFun)" stroke="#0f7be6"/><path d="M3.5 12.0L6.5 8.5H12.5L15.5 12.0L12.5 15.5H6.5Z" fill="#fff" stroke="#e8801c" stroke-width="1.2"/><circle cx="9.5" cy="12.0" r="2.4" fill="#22b41c"/><circle cx="9.5" cy="12.0" r="1.2" fill="#222"/></svg>
<svg style="position:absolute;left:290px;top:102px;overflow:hidden" width="16" height="16"><path d="M1.5 1.5H4.5L5.5 2.5H8.5V5.5H1.5Z" fill="url(#gFolder)" stroke="#e39a1a"/><path d="M4.5 6V12M4.5 9.5H8" stroke="#556" stroke-width="1"/><path d="M9.5 6.5H12.5L13.5 7.5H16.5V10.5H9.5Z" fill="url(#gFolder)" stroke="#e39a1a"/><path d="M9.5 12.5H12.5L13.5 13.5H16.5V15.5H9.5Z" fill="url(#gFolder)" stroke="#e39a1a"/><path d="M0.5 13.5L3.5 10.5H7.5L10.5 13.5L7.5 16.5H3.5Z" fill="#fff" stroke="#e8801c" stroke-width="1.2"/><circle cx="5.5" cy="13.5" r="2.1" fill="#22b41c"/><circle cx="5.5" cy="13.5" r="1.05" fill="#222"/></svg>
<svg style="position:absolute;left:312px;top:101px;overflow:hidden" width="16" height="16"><rect x="1" y="0" width="3" height="1" fill="#0a7a0a"/><rect x="0" y="1" width="2" height="1" fill="#0a7a0a"/><rect x="4" y="1" width="1" height="1" fill="#0a7a0a"/><rect x="0" y="2" width="2" height="1" fill="#0a7a0a"/><rect x="1" y="3" width="3" height="1" fill="#0a7a0a"/><rect x="3" y="4" width="2" height="1" fill="#0a7a0a"/><rect x="0" y="5" width="1" height="1" fill="#0a7a0a"/><rect x="3" y="5" width="2" height="1" fill="#0a7a0a"/><rect x="1" y="6" width="3" height="1" fill="#0a7a0a"/><rect x="7" y="0" width="3" height="1" fill="#0a7a0a"/><rect x="6" y="1" width="2" height="1" fill="#0a7a0a"/><rect x="9" y="1" width="2" height="1" fill="#0a7a0a"/><rect x="6" y="2" width="2" height="1" fill="#0a7a0a"/><rect x="9" y="2" width="2" height="1" fill="#0a7a0a"/><rect x="6" y="3" width="2" height="1" fill="#0a7a0a"/><rect x="9" y="3" width="2" height="1" fill="#0a7a0a"/><rect x="6" y="4" width="2" height="1" fill="#0a7a0a"/><rect x="9" y="4" width="2" height="1" fill="#0a7a0a"/><rect x="7" y="5" width="3" height="1" fill="#0a7a0a"/><rect x="9" y="6" width="2" height="1" fill="#0a7a0a"/><rect x="12" y="0" width="2" height="1" fill="#0a7a0a"/><rect x="12" y="1" width="2" height="1" fill="#0a7a0a"/><rect x="12" y="2" width="2" height="1" fill="#0a7a0a"/><rect x="12" y="3" width="2" height="1" fill="#0a7a0a"/><rect x="12" y="4" width="2" height="1" fill="#0a7a0a"/><rect x="12" y="5" width="2" height="1" fill="#0a7a0a"/><rect x="12" y="6" width="4" height="1" fill="#0a7a0a"/><path d="M2.5 12.0L5.5 8.5H11.5L14.5 12.0L11.5 15.5H5.5Z" fill="#fff" stroke="#e8801c" stroke-width="1.2"/><circle cx="8.5" cy="12.0" r="2.4" fill="#22b41c"/><circle cx="8.5" cy="12.0" r="1.2" fill="#222"/></svg>
<svg style="position:absolute;left:343px;top:101px;overflow:hidden" width="16" height="16"><path d="M5 4.5C8 1.5 12.5 2 14 5.5" stroke="#0f7a0f" stroke-width="4.2" fill="none"/><path d="M5 4.5C8 1.5 12.5 2 14 5.5" stroke="#5fe040" stroke-width="2.4" fill="none"/><path d="M0.5 1L7 7.5H0.5Z" fill="#4cd030" stroke="#0f7a0f"/><path d="M11 11.5C8 14.5 3.5 14 2 10.5" stroke="#0f7a0f" stroke-width="4.2" fill="none"/><path d="M11 11.5C8 14.5 3.5 14 2 10.5" stroke="#5fe040" stroke-width="2.4" fill="none"/><path d="M15.5 15L9 8.5H15.5Z" fill="#4cd030" stroke="#0f7a0f"/></svg>
<svg style="position:absolute;left:366px;top:101px;overflow:hidden" width="16" height="16"><rect x="2" y="0" width="4" height="3" fill="#3a3a3a"/><rect x="10" y="0" width="4" height="3" fill="#3a3a3a"/><rect x="3" y="1" width="2" height="1" fill="#aaa"/><rect x="11" y="1" width="2" height="1" fill="#aaa"/><rect x="1" y="3" width="5" height="6" fill="url(#gGray)"/><rect x="10" y="3" width="5" height="6" fill="url(#gGray)"/><rect x="0" y="9" width="6" height="7" fill="url(#gGray)"/><rect x="10" y="9" width="6" height="7" fill="url(#gGray)"/><rect x="6" y="6" width="4" height="4" fill="#555"/><rect x="7" y="7" width="2" height="2" fill="#999"/></svg>
<svg style="position:absolute;left:389px;top:101px;overflow:hidden" width="16" height="16"><rect x="4.5" y="0.5" width="7" height="5" fill="#fff" stroke="#0f7be6"/><rect x="0.5" y="6.5" width="15" height="6.5" rx="2" fill="url(#gPrintLow)" stroke="#6a6a6a"/><rect x="2" y="4" width="12" height="5" rx="1.5" fill="url(#gPrintTop)"/><rect x="4.5" y="11.5" width="7" height="4" fill="#fff" stroke="#0f7be6"/></svg>
<svg style="position:absolute;left:412px;top:101px;overflow:hidden" width="16" height="16"><path d="M0.5 0.5H8.5L12.5 4.5V15.5H0.5Z" fill="#fff" stroke="#0f7be6"/><path d="M8.5 0.5V4.5H12.5" fill="#dcefff" stroke="#0a55c8"/><rect x="2" y="2" width="6" height="12" fill="#c9e5fb"/><circle cx="8" cy="9" r="3.6" fill="#e6f4ff" stroke="#555" stroke-width="1.1"/><path d="M10.5 11.5L14.5 15.5" stroke="#444" stroke-width="1.8"/></svg>
<svg style="position:absolute;left:435px;top:101px;overflow:hidden" width="16" height="16"><path d="M3.5 0.5H11.5L15.5 4.5V15.5H3.5Z" fill="#fff" stroke="#0f7be6"/><rect x="5" y="2" width="6" height="5" fill="#c9e5fb"/><path d="M11.5 0.5V4.5H15.5" fill="#dcefff" stroke="#0a55c8"/><rect x="6" y="6" width="7" height="1" fill="#6c7d8e"/><rect x="6" y="8" width="7" height="1" fill="#6c7d8e"/><rect x="6" y="10" width="7" height="1" fill="#6c7d8e"/><rect x="6" y="12" width="7" height="1" fill="#6c7d8e"/><rect x="0.5" y="4.5" width="8" height="7" fill="#fff" stroke="#0f7be6"/><path d="M1.8 6L3 10.5L4.5 7.5L6 10.5L7.5 6" stroke="#0a5fd0" stroke-width="1.2" fill="none"/></svg>
<svg style="position:absolute;left:458px;top:101px;overflow:hidden" width="16" height="16"><path d="M3.5 0.5H11.5L15.5 4.5V15.5H3.5Z" fill="#fff" stroke="#0f7be6"/><rect x="5" y="2" width="6" height="5" fill="#c9e5fb"/><path d="M11.5 0.5V4.5H15.5" fill="#dcefff" stroke="#0a55c8"/><rect x="6" y="6" width="7" height="1" fill="#6c7d8e"/><rect x="6" y="8" width="7" height="1" fill="#6c7d8e"/><rect x="6" y="10" width="7" height="1" fill="#6c7d8e"/><rect x="6" y="12" width="7" height="1" fill="#6c7d8e"/><rect x="0.5" y="3.5" width="8" height="8" fill="#fff" stroke="#0a7a0a"/><path d="M2.5 5.5L6.5 9.5M6.5 5.5L2.5 9.5" stroke="#0a8a0a" stroke-width="1.6"/></svg>
<svg style="position:absolute;left:481px;top:101px;overflow:hidden" width="16" height="16"><path d="M3.5 0.5H11.5L15.5 4.5V15.5H3.5Z" fill="#fff" stroke="#0f7be6"/><rect x="5" y="2" width="6" height="5" fill="#c9e5fb"/><path d="M11.5 0.5V4.5H15.5" fill="#dcefff" stroke="#0a55c8"/><rect x="6" y="6" width="7" height="1" fill="#6c7d8e"/><rect x="6" y="8" width="7" height="1" fill="#6c7d8e"/><rect x="6" y="10" width="7" height="1" fill="#6c7d8e"/><rect x="6" y="12" width="7" height="1" fill="#6c7d8e"/><path d="M9 14.5L12.5 7.5L13.5 14.5M10.5 12H13.2" stroke="#d02000" stroke-width="1.2" fill="none"/><g transform="translate(0 8)"><path d="M1.8 0.8H7.3V6.3L5.6 4.6L2.4 7.8L0.4 5.8L3.6 2.6Z" fill="url(#gArrow)" stroke="#d86000" stroke-width="0.9" stroke-linejoin="round"/></g></svg>
<svg style="position:absolute;left:504px;top:101px;overflow:hidden" width="16" height="16"><rect x="4.5" y="0.5" width="11" height="11" fill="#fff" stroke="#0f7be6"/><path d="M6.5 3L8 9.5L10.2 5L12 9.5L14.5 3" stroke="#0a6ae0" stroke-width="1.6" fill="none"/><g transform="translate(0 8)"><path d="M1.8 0.8H7.3V6.3L5.6 4.6L2.4 7.8L0.4 5.8L3.6 2.6Z" fill="url(#gArrow)" stroke="#d86000" stroke-width="0.9" stroke-linejoin="round"/></g></svg>
<svg style="position:absolute;left:527px;top:101px;overflow:hidden" width="16" height="16"><rect x="5.5" y="0.5" width="10" height="12" fill="#fff" stroke="#1a9a1a"/><path d="M7.5 3L13.5 10M13.5 3L7.5 10" stroke="#0a8a0a" stroke-width="2.2"/><g transform="translate(0 8)"><path d="M1.8 0.8H7.3V6.3L5.6 4.6L2.4 7.8L0.4 5.8L3.6 2.6Z" fill="url(#gArrow)" stroke="#d86000" stroke-width="0.9" stroke-linejoin="round"/></g></svg>
<svg style="position:absolute;left:550px;top:101px;overflow:hidden" width="16" height="16"><path d="M3.5 0.5H11.5L15.5 4.5V15.5H3.5Z" fill="#fff" stroke="#0f7be6"/><rect x="5" y="2" width="6" height="5" fill="#c9e5fb"/><path d="M11.5 0.5V4.5H15.5" fill="#dcefff" stroke="#0a55c8"/><path d="M7 10.5H13C13 7.5 11.5 6 10 6C8 6 6.5 7.8 6.5 10S8 14 10 14C11.3 14 12.3 13.5 13 12.5" stroke="#1f6fc0" stroke-width="1.8" fill="none"/><g transform="translate(0 8)"><path d="M1.8 0.8H7.3V6.3L5.6 4.6L2.4 7.8L0.4 5.8L3.6 2.6Z" fill="url(#gArrow)" stroke="#d86000" stroke-width="0.9" stroke-linejoin="round"/></g></svg>
<svg style="position:absolute;left:573px;top:101px;overflow:hidden" width="16" height="16"><path d="M3.5 1.5H11.5L15.5 5.5V15.5H3.5Z" fill="#fff" stroke="#0f7be6"/><rect x="5" y="3" width="6" height="5" fill="#c9e5fb"/><path d="M11.5 1.5V5.5H15.5" fill="#dcefff" stroke="#0a55c8"/><rect x="6" y="7" width="7" height="1" fill="#6c7d8e"/><rect x="6" y="9" width="7" height="1" fill="#6c7d8e"/><rect x="6" y="11" width="7" height="1" fill="#6c7d8e"/><rect x="6" y="13" width="7" height="1" fill="#6c7d8e"/><rect x="1" y="0" width="13" height="7" rx="1" fill="#0e7a14"/><rect x="3" y="1" width="2" height="1" fill="#fff"/><rect x="2" y="2" width="1" height="1" fill="#fff"/><rect x="2" y="3" width="1" height="1" fill="#fff"/><rect x="2" y="4" width="1" height="1" fill="#fff"/><rect x="3" y="5" width="2" height="1" fill="#fff"/><rect x="7" y="1" width="2" height="1" fill="#fff"/><rect x="6" y="2" width="1" height="1" fill="#fff"/><rect x="7" y="3" width="1" height="1" fill="#fff"/><rect x="8" y="4" width="1" height="1" fill="#fff"/><rect x="6" y="5" width="2" height="1" fill="#fff"/><rect x="10" y="1" width="1" height="1" fill="#fff"/><rect x="12" y="1" width="1" height="1" fill="#fff"/><rect x="10" y="2" width="1" height="1" fill="#fff"/><rect x="12" y="2" width="1" height="1" fill="#fff"/><rect x="10" y="3" width="1" height="1" fill="#fff"/><rect x="12" y="3" width="1" height="1" fill="#fff"/><rect x="10" y="4" width="1" height="1" fill="#fff"/><rect x="12" y="4" width="1" height="1" fill="#fff"/><rect x="11" y="5" width="1" height="1" fill="#fff"/><g transform="translate(0 8)"><path d="M1.8 0.8H7.3V6.3L5.6 4.6L2.4 7.8L0.4 5.8L3.6 2.6Z" fill="url(#gArrow)" stroke="#d86000" stroke-width="0.9" stroke-linejoin="round"/></g></svg>
<svg style="position:absolute;left:596px;top:101px;overflow:hidden" width="16" height="16"><path d="M3.5 1.5H11.5L15.5 5.5V15.5H3.5Z" fill="#fff" stroke="#0f7be6"/><rect x="5" y="3" width="6" height="5" fill="#c9e5fb"/><path d="M11.5 1.5V5.5H15.5" fill="#dcefff" stroke="#0a55c8"/><rect x="6" y="7" width="7" height="1" fill="#6c7d8e"/><rect x="6" y="9" width="7" height="1" fill="#6c7d8e"/><rect x="6" y="11" width="7" height="1" fill="#6c7d8e"/><rect x="6" y="13" width="7" height="1" fill="#6c7d8e"/><rect x="1" y="0" width="13" height="7" rx="1" fill="#0e7a14"/><rect x="2" y="1" width="3" height="1" fill="#fff"/><rect x="3" y="2" width="1" height="1" fill="#fff"/><rect x="3" y="3" width="1" height="1" fill="#fff"/><rect x="3" y="4" width="1" height="1" fill="#fff"/><rect x="3" y="5" width="1" height="1" fill="#fff"/><rect x="6" y="1" width="1" height="1" fill="#fff"/><rect x="8" y="1" width="1" height="1" fill="#fff"/><rect x="6" y="2" width="1" height="1" fill="#fff"/><rect x="8" y="2" width="1" height="1" fill="#fff"/><rect x="7" y="3" width="1" height="1" fill="#fff"/><rect x="6" y="4" width="1" height="1" fill="#fff"/><rect x="8" y="4" width="1" height="1" fill="#fff"/><rect x="6" y="5" width="1" height="1" fill="#fff"/><rect x="8" y="5" width="1" height="1" fill="#fff"/><rect x="10" y="1" width="3" height="1" fill="#fff"/><rect x="11" y="2" width="1" height="1" fill="#fff"/><rect x="11" y="3" width="1" height="1" fill="#fff"/><rect x="11" y="4" width="1" height="1" fill="#fff"/><rect x="11" y="5" width="1" height="1" fill="#fff"/><g transform="translate(0 8)"><path d="M1.8 0.8H7.3V6.3L5.6 4.6L2.4 7.8L0.4 5.8L3.6 2.6Z" fill="url(#gArrow)" stroke="#d86000" stroke-width="0.9" stroke-linejoin="round"/></g></svg>
<svg style="position:absolute;left:619px;top:101px;overflow:hidden" width="16" height="16"><path d="M3.5 1.5H11.5L15.5 5.5V15.5H3.5Z" fill="#fff" stroke="#0f7be6"/><rect x="5" y="3" width="6" height="5" fill="#c9e5fb"/><path d="M11.5 1.5V5.5H15.5" fill="#dcefff" stroke="#0a55c8"/><rect x="6" y="7" width="7" height="1" fill="#6c7d8e"/><rect x="6" y="9" width="7" height="1" fill="#6c7d8e"/><rect x="6" y="11" width="7" height="1" fill="#6c7d8e"/><rect x="6" y="13" width="7" height="1" fill="#6c7d8e"/><rect x="0" y="0" width="13" height="7" rx="1" fill="#0e7a14"/><rect x="1" y="1" width="1" height="1" fill="#fff"/><rect x="3" y="1" width="1" height="1" fill="#fff"/><rect x="1" y="2" width="1" height="1" fill="#fff"/><rect x="3" y="2" width="1" height="1" fill="#fff"/><rect x="2" y="3" width="1" height="1" fill="#fff"/><rect x="1" y="4" width="1" height="1" fill="#fff"/><rect x="3" y="4" width="1" height="1" fill="#fff"/><rect x="1" y="5" width="1" height="1" fill="#fff"/><rect x="3" y="5" width="1" height="1" fill="#fff"/><rect x="5" y="1" width="1" height="1" fill="#fff"/><rect x="7" y="1" width="1" height="1" fill="#fff"/><rect x="5" y="2" width="3" height="1" fill="#fff"/><rect x="5" y="3" width="3" height="1" fill="#fff"/><rect x="5" y="4" width="1" height="1" fill="#fff"/><rect x="7" y="4" width="1" height="1" fill="#fff"/><rect x="5" y="5" width="1" height="1" fill="#fff"/><rect x="7" y="5" width="1" height="1" fill="#fff"/><rect x="9" y="1" width="1" height="1" fill="#fff"/><rect x="9" y="2" width="1" height="1" fill="#fff"/><rect x="9" y="3" width="1" height="1" fill="#fff"/><rect x="9" y="4" width="1" height="1" fill="#fff"/><rect x="9" y="5" width="3" height="1" fill="#fff"/><g transform="translate(0 8)"><path d="M1.8 0.8H7.3V6.3L5.6 4.6L2.4 7.8L0.4 5.8L3.6 2.6Z" fill="url(#gArrow)" stroke="#d86000" stroke-width="0.9" stroke-linejoin="round"/></g></svg>
<svg style="position:absolute;left:642px;top:101px;overflow:hidden" width="16" height="16"><path d="M0.5 0V15.5H16" stroke="#333" stroke-width="1" fill="none"/><rect x="3" y="0" width="4" height="15" fill="url(#gPurple)"/><rect x="7" y="7" width="4" height="8" fill="url(#gBarO)"/><rect x="11" y="4" width="4" height="11" fill="url(#gBarG)"/></svg>
<svg style="position:absolute;left:673px;top:101px;overflow:hidden" width="16" height="16"><rect x="7.5" y="0.5" width="8" height="15" fill="#f4faff" stroke="#888"/><rect x="7" y="0" width="9" height="2" fill="#1a7ad8"/><rect x="9" y="3" width="5" height="11" fill="#d8ecfb"/><rect x="9" y="4" width="5" height="1" fill="#8a9aa8"/><rect x="9" y="6" width="5" height="1" fill="#8a9aa8"/><rect x="9" y="8" width="5" height="1" fill="#8a9aa8"/><rect x="9" y="10" width="5" height="1" fill="#8a9aa8"/><rect x="9" y="12" width="5" height="1" fill="#8a9aa8"/><circle cx="3.5" cy="12.5" r="3.0" fill="#12b012" stroke="#077007" stroke-width="1"/><path d="M1.2999999999999998 12.5H5.7M3.5 10.3V14.7" stroke="#fff" stroke-width="1.3"/></svg>
<svg style="position:absolute;left:696px;top:101px;overflow:hidden" width="16" height="16"><g transform="translate(-6 0)"><rect x="7.5" y="0.5" width="8" height="15" fill="#f4faff" stroke="#888"/><rect x="7" y="0" width="9" height="2" fill="#1a7ad8"/><rect x="9" y="3" width="5" height="11" fill="#d8ecfb"/><rect x="9" y="4" width="5" height="1" fill="#8a9aa8"/><rect x="9" y="6" width="5" height="1" fill="#8a9aa8"/><rect x="9" y="8" width="5" height="1" fill="#8a9aa8"/><rect x="9" y="10" width="5" height="1" fill="#8a9aa8"/><rect x="9" y="12" width="5" height="1" fill="#8a9aa8"/></g><g transform="translate(12.5 12.5)"><rect x="-1" y="-4.1" width="2" height="1.8" fill="#f08000" transform="rotate(0)"/><rect x="-1" y="-4.1" width="2" height="1.8" fill="#f08000" transform="rotate(45)"/><rect x="-1" y="-4.1" width="2" height="1.8" fill="#f08000" transform="rotate(90)"/><rect x="-1" y="-4.1" width="2" height="1.8" fill="#f08000" transform="rotate(135)"/><rect x="-1" y="-4.1" width="2" height="1.8" fill="#f08000" transform="rotate(180)"/><rect x="-1" y="-4.1" width="2" height="1.8" fill="#f08000" transform="rotate(225)"/><rect x="-1" y="-4.1" width="2" height="1.8" fill="#f08000" transform="rotate(270)"/><rect x="-1" y="-4.1" width="2" height="1.8" fill="#f08000" transform="rotate(315)"/><circle r="3" fill="url(#gGear)" stroke="#e07000" stroke-width="0.6"/><circle r="1.26" fill="#fff4d0" stroke="#d06000" stroke-width="0.5"/></g></svg>
<svg style="position:absolute;left:719px;top:101px;overflow:hidden" width="16" height="16"><rect x="0.5" y="0.5" width="15" height="12" fill="#d2eafc" stroke="#0f7be6"/><rect x="0" y="0" width="16" height="2" fill="#0f7be6"/><rect x="5" y="2" width="1" height="10" fill="#7a98b0"/><rect x="10" y="2" width="1" height="10" fill="#7a98b0"/><rect x="1" y="5" width="14" height="1" fill="#7a98b0"/><rect x="1" y="8" width="14" height="1" fill="#7a98b0"/><g transform="translate(11.5 12.5)"><rect x="-1" y="-4.1" width="2" height="1.8" fill="#f08000" transform="rotate(0)"/><rect x="-1" y="-4.1" width="2" height="1.8" fill="#f08000" transform="rotate(45)"/><rect x="-1" y="-4.1" width="2" height="1.8" fill="#f08000" transform="rotate(90)"/><rect x="-1" y="-4.1" width="2" height="1.8" fill="#f08000" transform="rotate(135)"/><rect x="-1" y="-4.1" width="2" height="1.8" fill="#f08000" transform="rotate(180)"/><rect x="-1" y="-4.1" width="2" height="1.8" fill="#f08000" transform="rotate(225)"/><rect x="-1" y="-4.1" width="2" height="1.8" fill="#f08000" transform="rotate(270)"/><rect x="-1" y="-4.1" width="2" height="1.8" fill="#f08000" transform="rotate(315)"/><circle r="3" fill="url(#gGear)" stroke="#e07000" stroke-width="0.6"/><circle r="1.26" fill="#fff4d0" stroke="#d06000" stroke-width="0.5"/></g></svg>
<svg style="position:absolute;left:742px;top:101px;overflow:hidden" width="16" height="16"><rect x="0.5" y="0.5" width="6" height="12" fill="#fff" stroke="#f08a20"/><rect x="0" y="0" width="7" height="2" fill="#f08a20"/><rect x="2" y="4" width="3" height="1" fill="#e0a070"/><rect x="2" y="6" width="3" height="1" fill="#e0a070"/><rect x="2" y="8" width="3" height="1" fill="#e0a070"/><rect x="2" y="10" width="3" height="1" fill="#e0a070"/><rect x="10.5" y="0.5" width="5" height="12" fill="#fff" stroke="#b02090"/><rect x="10" y="0" width="6" height="2" fill="#b02090"/><rect x="12" y="4" width="2" height="1" fill="#d080c0"/><rect x="12" y="6" width="2" height="1" fill="#d080c0"/><rect x="12" y="8" width="2" height="1" fill="#d080c0"/><rect x="12" y="10" width="2" height="1" fill="#d080c0"/><rect x="4.5" y="0.5" width="7" height="12" fill="#e8fcfc" stroke="#18c8d0"/><rect x="4" y="0" width="8" height="2" fill="#18c8d0"/><rect x="6" y="4" width="4" height="1" fill="#20a0a8"/><rect x="6" y="6" width="4" height="1" fill="#20a0a8"/><rect x="6" y="8" width="4" height="1" fill="#20a0a8"/><rect x="6" y="10" width="4" height="1" fill="#20a0a8"/><g transform="translate(11.5 12.5)"><rect x="-1" y="-4.1" width="2" height="1.8" fill="#f08000" transform="rotate(0)"/><rect x="-1" y="-4.1" width="2" height="1.8" fill="#f08000" transform="rotate(45)"/><rect x="-1" y="-4.1" width="2" height="1.8" fill="#f08000" transform="rotate(90)"/><rect x="-1" y="-4.1" width="2" height="1.8" fill="#f08000" transform="rotate(135)"/><rect x="-1" y="-4.1" width="2" height="1.8" fill="#f08000" transform="rotate(180)"/><rect x="-1" y="-4.1" width="2" height="1.8" fill="#f08000" transform="rotate(225)"/><rect x="-1" y="-4.1" width="2" height="1.8" fill="#f08000" transform="rotate(270)"/><rect x="-1" y="-4.1" width="2" height="1.8" fill="#f08000" transform="rotate(315)"/><circle r="3" fill="url(#gGear)" stroke="#e07000" stroke-width="0.6"/><circle r="1.26" fill="#fff4d0" stroke="#d06000" stroke-width="0.5"/></g></svg>
<svg style="position:absolute;left:773px;top:101px;overflow:hidden" width="16" height="16"><rect x="0" y="0.5" width="2" height="15" rx="0.6" fill="#1a8ae8"/><rect x="0" y="0.5" width="0.8" height="15" fill="#0a5cc0"/><path d="M2.7 8L15.2 0.9V15.1Z" fill="url(#gNavL)" stroke="#0a5cc0" stroke-width="1.2" stroke-linejoin="round"/></svg>
<svg style="position:absolute;left:796px;top:101px;overflow:hidden" width="16" height="16"><path d="M2.7 8L13.2 0.9V15.1Z" fill="url(#gNavL)" stroke="#0a5cc0" stroke-width="1.2" stroke-linejoin="round"/></svg>
<svg style="position:absolute;left:819px;top:101px;overflow:hidden" width="16" height="16"><path d="M13.3 8L1.8 0.9V15.1Z" fill="url(#gNavR)" stroke="#0a5cc0" stroke-width="1.2" stroke-linejoin="round"/></svg>
<svg style="position:absolute;left:842px;top:101px;overflow:hidden" width="16" height="16"><path d="M13.3 8L0.8 0.9V15.1Z" fill="url(#gNavR)" stroke="#0a5cc0" stroke-width="1.2" stroke-linejoin="round"/><rect x="14" y="0.5" width="2" height="15" rx="0.6" fill="#1a8ae8"/><rect x="14" y="0.5" width="0.8" height="15" fill="#0a5cc0"/></svg>
</body></html>
